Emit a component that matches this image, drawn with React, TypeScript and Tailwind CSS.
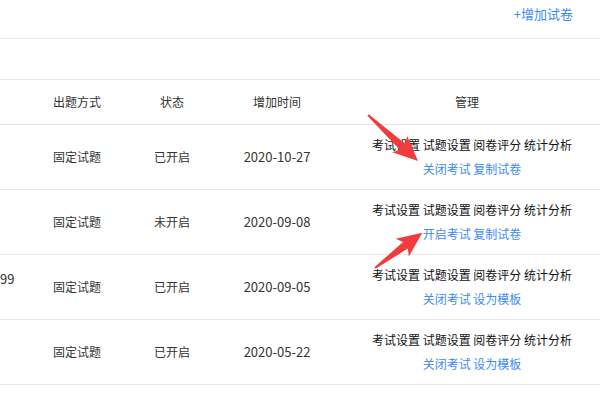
const rows = [
  { mode: "固定试题", status: "已开启", date: "2020-10-27", links: ["关闭考试", "复制试卷"], note: "" },
  { mode: "固定试题", status: "未开启", date: "2020-09-08", links: ["开启考试", "复制试卷"], note: "" },
  { mode: "固定试题", status: "已开启", date: "2020-09-05", links: ["关闭考试", "设为模板"], note: "99" },
  { mode: "固定试题", status: "已开启", date: "2020-05-22", links: ["关闭考试", "设为模板"], note: "" },
];

const grid = "grid grid-cols-[30px_94px_96px_114px_1fr] items-center";

function Arrow({ x, y, angle, len }: { x: number; y: number; angle: number; len: number }) {
  const L = len;
  const pts = `0,-1 ${L - 21},-4 ${L - 25},-11 ${L},0 ${L - 25},11 ${L - 21},4 0,1`;
  return <polygon points={pts} fill="#f03c3c" transform={`translate(${x} ${y}) rotate(${angle})`} />;
}

export default function App() {
  return (
    <div className="relative h-[400px] w-[600px] overflow-hidden bg-white font-['Noto_Sans_CJK_SC',sans-serif] text-[12px] text-[#333]">
      <div className="flex h-[39px] items-start justify-end border-b border-[#e6e6e6] pr-[27px] pt-[4px]">
        <a className="text-[13px] leading-[20px] text-[#3d8bf5]">+增加试卷</a>
      </div>
      <div className="h-[41px] border-b border-[#e6e6e6]" />
      <div className={`${grid} h-[45px] border-b border-[#e6e6e6] text-center`}>
        <div />
        <div>出题方式</div>
        <div>状态</div>
        <div>增加时间</div>
        <div>管理</div>
      </div>
      {rows.map((r, i) => (
        <div key={i} className={`${grid} relative h-[65px] border-b border-[#e6e6e6] text-center`}>
          <div className="relative self-stretch">
            {r.note ? (
              <span className="absolute left-0 top-[14px] text-[13px]">{r.note}</span>
            ) : null}
          </div>
          <div>{r.mode}</div>
          <div>{r.status}</div>
          <div className="text-[13px]">{r.date}</div>
          <div className="pl-[10px] leading-[24px]">
            <div className="text-[#111]">考试设置 试题设置 阅卷评分 统计分析</div>
            <div className="text-[#3d8bf5]">
              {r.links[0]} {r.links[1]}
            </div>
          </div>
        </div>
      ))}
      <svg className="pointer-events-none absolute left-0 top-0" width="600" height="400">
        <Arrow x={368} y={115} angle={42.6} len={68} />
        <Arrow x={375} y={268} angle={-36.7} len={59} />
      </svg>
    </div>
  );
}
